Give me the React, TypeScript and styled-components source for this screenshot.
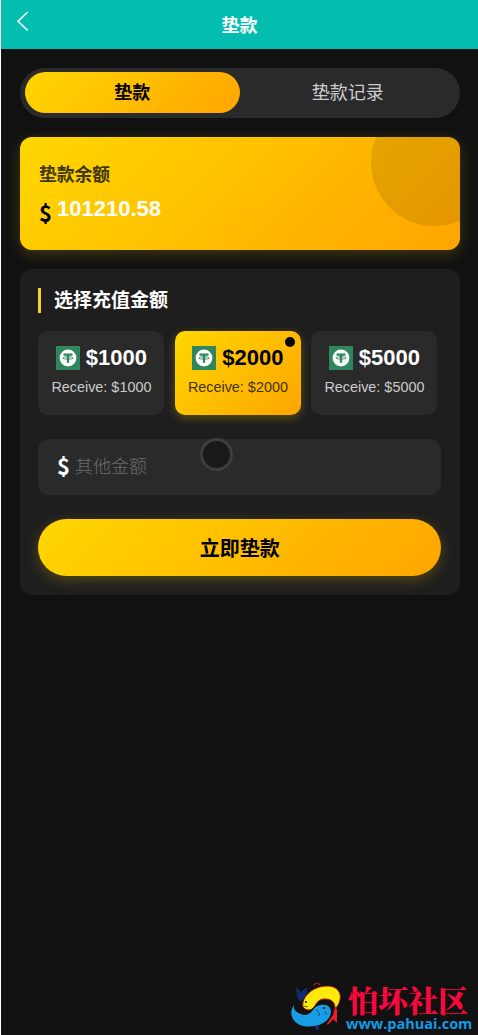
import React from "react";
import styled, { createGlobalStyle } from "styled-components";

const Global = createGlobalStyle`
  * { box-sizing: border-box; }
  body { margin: 0; background: #111; font-family: "Liberation Sans", "Noto Sans CJK SC", sans-serif; }
  button, input { font: inherit; border: 0; }
`;
const gold = "linear-gradient(135deg, #ffd700, #ffa500)";

const Page = styled.div`
  position: relative;
  width: 478px;
  height: 1035px;
  overflow: hidden;
  border-left: 1px solid #fff;
  background: #111;
`;
const Header = styled.header`
  display: grid;
  grid-template-columns: 60px 1fr 60px;
  align-items: center;
  height: 49px;
  background: #03beae;
`;
const Back = styled.button`
  display: flex;
  padding: 0 0 7px 15px;
  background: none;
`;
const Heading = styled.h1`
  margin: 0;
  padding-top: 2px;
  text-align: center;
  color: #fff;
  font-size: 18px;
  line-height: 26px;
`;
const Main = styled.main`
  display: flex;
  flex-direction: column;
  gap: 19px;
  padding: 19px 18px 0 19px;
`;
const Tabs = styled.nav`
  display: flex;
  height: 50px;
  padding: 4px 4.5px 5px;
  border-radius: 25px;
  background: #2a2a2a;
`;
const Tab = styled.button<{ $active?: boolean }>`
  flex: 1;
  padding: 0 0 3px;
  border-radius: 21px;
  font-size: 18px;
  font-weight: ${(p) => (p.$active ? 700 : 400)};
  color: ${(p) => (p.$active ? "#000" : "#ccc")};
  background: ${(p) => (p.$active ? gold : "none")};
`;
const Balance = styled.section`
  position: relative;
  height: 113px;
  padding: 25px 19px 0;
  border-radius: 12px;
  background: ${gold};
  box-shadow: 0 4px 14px rgba(255, 215, 0, 0.2);
  overflow: hidden;
`;
const Orb = styled.div`
  position: absolute;
  top: -38px;
  right: -38px;
  width: 127px;
  height: 127px;
  border-radius: 50%;
  background: rgba(0, 0, 0, 0.1);
`;
const BalanceLabel = styled.div`
  color: #403708;
  font-size: 17.8px;
  font-weight: 700;
  line-height: 26px;
`;
const BalanceRow = styled.div`
  display: flex;
  gap: 5px;
  margin-top: 8px;
  font-size: 22px;
  font-weight: 700;
  line-height: 26px;
  color: #fff;
`;
const Currency = styled.span<{ $low?: boolean }>`
  width: 13px;
  font: 700 22px/26px "Noto Sans CJK SC", sans-serif;
  color: ${(p) => (p.$low ? "#000" : "#fff")};
  padding: ${(p) => (p.$low ? "3px 0 0" : "0 0 4px")};
`;
const Card = styled.section`
  height: 326px;
  padding: 19px 19px 0 18.4px;
  border-radius: 12px;
  background: #1e1e1e;
`;
const Title = styled.h2`
  margin: 0;
  height: 25px;
  padding-left: 12.5px;
  border-left: 3px solid #ffd024;
  color: #fff;
  font-size: 19px;
  line-height: 26px;
`;
const Options = styled.div`
  display: grid;
  grid-template-columns: repeat(3, 126px);
  gap: 10.5px;
  margin-top: 18px;
`;
const Option = styled.button<{ $active?: boolean }>`
  position: relative;
  height: 83.5px;
  padding: 0 0 4px;
  border-radius: 10px;
  background: ${(p) => (p.$active ? gold : "#2a2a2a")};
  color: ${(p) => (p.$active ? "#000" : "#fff")};
  box-shadow: ${(p) => (p.$active ? "0 3px 10px rgba(255,215,0,.28)" : "none")};
`;
const Amount = styled.div`
  display: flex;
  align-items: center;
  justify-content: center;
  gap: 6px;
  height: 26px;
  font-size: 22px;
  font-weight: 700;
`;
const Receive = styled.div<{ $active?: boolean }>`
  margin-top: 7px;
  font-size: 14.4px;
  line-height: 18px;
  white-space: nowrap;
  color: ${(p) => (p.$active ? "#403408" : "#ccc")};
`;
const Dot = styled.i`
  position: absolute;
  top: 6px;
  right: 6px;
  width: 10px;
  height: 10px;
  border-radius: 50%;
  background: #000;
`;
const Field = styled.label`
  display: flex;
  align-items: center;
  gap: 5px;
  height: 56px;
  margin-top: 24px;
  padding: 0 18.5px;
  border-radius: 11px;
  background: #2a2a2a;
`;
const Input = styled.input`
  flex: 1;
  padding: 2px 0 0;
  outline: 0;
  background: none;
  color: #fff;
  font-size: 18px;
  &::placeholder { color: #6c6c6c; font-weight: 300; font-family: "Noto Sans CJK SC", sans-serif; }
`;
const Submit = styled.button`
  display: block;
  width: 100%;
  height: 57px;
  margin-top: 24.5px;
  padding: 0 0 1px;
  border-radius: 29px;
  background: ${gold};
  box-shadow: 0 4px 14px rgba(255, 215, 0, 0.23);
  color: #000;
  font-size: 20px;
  font-weight: 700;
`;
const FloatDot = styled.div`
  position: absolute;
  left: 198.5px;
  top: 437.5px;
  width: 33px;
  height: 33px;
  border: 3px solid #3d3d3d;
  border-radius: 50%;
  background: #191919;
`;
const Watermark = styled.div`
  position: absolute;
  left: 285px;
  bottom: 0;
  display: flex;
  align-items: flex-end;
`;
const Brand = styled.div`
  padding-left: 2px;
  color: #f8083d;
  font: 900 30px/32px "Noto Serif CJK SC", "Noto Sans CJK SC", serif;
`;
const Site = styled.div`
  padding-bottom: 3px;
  color: #129be5;
  font: 700 14.5px/17px "Open Sans", "Noto Sans", sans-serif;
  white-space: nowrap;
`;

const Tether = () => (
  <svg width="24" height="24" viewBox="0 0 24 24">
    <path fill="#2f875b" d="M0 0h24v24H0z" />
    <circle cx="12" cy="12" r="8.4" fill="#fff" />
    <path d="M7.5 8.6h9M12 8.5v8.3" stroke="#2f875b" strokeWidth="2.3" fill="none" />
    <ellipse cx="12" cy="12" rx="5.2" ry="1.2" stroke="#2f875b" strokeWidth=".8" fill="none" />
  </svg>
);

const FishLogo = () => (
  <svg width="60" height="57" viewBox="0 0 60 57">
    <path d="M10 9l5 5 6-5-1 9-6 6-3-6z" fill="#142b72" />
    <path d="M29 48h4v4h-3z" fill="#142b72" />
    <path d="M49 28l-2 9-7 10 4-2 3-4 4 4 0-13z" fill="#e91c2b" />
    <path d="M28 8c0-3 4-4 6-1" fill="none" stroke="#a51b20" strokeWidth="1.2" />
    <path d="M17 29C15 19 27 8 41 8c11 0 16 8 12 17-1 3-3 5-4 5 0-6-4-9-10-9-7 0-8 4-11 8-3 4-8 4-11 0z" fill="#ffe90a" stroke="#8f1714" strokeWidth="1" />
    <path d="M8 27C3 34 5 43 14 47c11 4 26 0 30-9 2-5 1-10-5-11-6-1-10 2-12 5-4 5-8 6-12 4-4-1-8-4-7-9z" fill="#189de5" />
    <path d="M18 28c2 1 3 1 4 0M38 34c2 0 2 2 3 3M30 31l3 4 0 3" fill="none" stroke="#17334c" strokeWidth=".8" />
    <circle cx="20" cy="24" r="1" fill="#111" />
    <circle cx="38" cy="30" r="1" fill="#111" />
  </svg>
);

const options = [1000, 2000, 5000];

export default function App() {
  return (
    <Page>
      <Global />
      <Header>
        <Back aria-label="返回">
          <svg width="14" height="22" viewBox="0 0 14 22" fill="none" stroke="#e8fffb" strokeWidth="1.7">
            <path d="M11.8 2L2 11.3l9.8 9.2" />
          </svg>
        </Back>
        <Heading>垫款</Heading>
      </Header>
      <Main>
        <Tabs>
          <Tab $active>垫款</Tab>
          <Tab>垫款记录</Tab>
        </Tabs>
        <Balance>
          <Orb />
          <BalanceLabel>垫款余额</BalanceLabel>
          <BalanceRow>
            <Currency $low>$</Currency>
            <span>101210.58</span>
          </BalanceRow>
        </Balance>
        <Card>
          <Title>选择充值金额</Title>
          <Options>
            {options.map((n) => (
              <Option key={n} $active={n === 2000}>
                {n === 2000 && <Dot />}
                <Amount><Tether />${n}</Amount>
                <Receive $active={n === 2000}>Receive: ${n}</Receive>
              </Option>
            ))}
          </Options>
          <Field>
            <Currency>$</Currency>
            <Input placeholder="其他金额" />
          </Field>
          <Submit>立即垫款</Submit>
        </Card>
      </Main>
      <FloatDot />
      <Watermark>
        <FishLogo />
        <div>
          <Brand>怕坏社区</Brand>
          <Site>www.pahuai.com</Site>
        </div>
      </Watermark>
    </Page>
  );
}
